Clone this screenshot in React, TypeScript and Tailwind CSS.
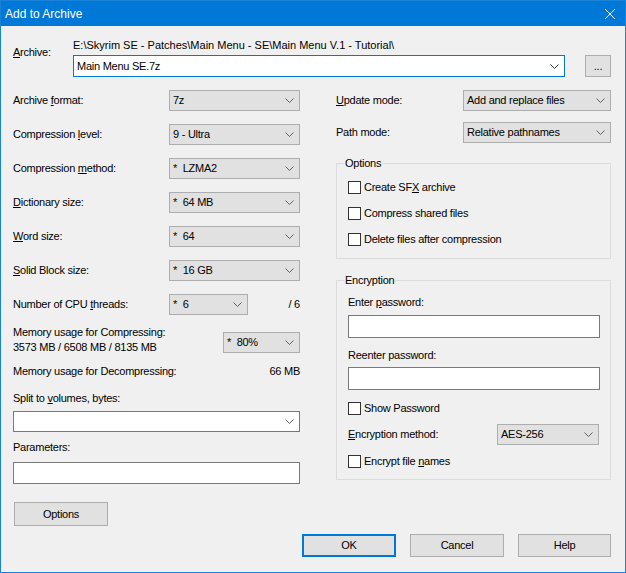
import type { ReactNode } from "react";
import { twMerge } from "tailwind-merge";

const archivePath = "E:\\Skyrim SE - Patches\\Main Menu - SE\\Main Menu V.1 - Tutorial\\";

const Chevron = ({ color = "#606060" }: { color?: string }) => (
  <svg width="9" height="5" viewBox="0 0 9 5" className="shrink-0">
    <polyline points="0.5,0.5 4.5,4.5 8.5,0.5" fill="none" stroke={color} strokeWidth="1" />
  </svg>
);

const Combo = ({ value, className }: { value?: ReactNode; className?: string }) => (
  <div
    className={twMerge(
      "flex h-[21px] items-center justify-between border border-[#adadad] bg-[#e1e1e1] pl-[3px] pr-[5px]",
      className
    )}
  >
    <span className="whitespace-pre">{value}</span>
    <Chevron />
  </div>
);

const Check = ({ children, className }: { children: ReactNode; className?: string }) => (
  <div className={twMerge("flex h-[16px] items-center pl-[11px]", className)}>
    <span className="h-[13px] w-[13px] border border-[#333333] bg-white" />
    <span className="ml-[3px]">{children}</span>
  </div>
);

const Group = ({ title, children, className }: { title: string; children: ReactNode; className?: string }) => (
  <div className={twMerge("flex flex-col border border-[#dcdcdc]", className)}>
    <span className="-mt-[8px] ml-[7px] self-start bg-[#f0f0f0] px-[1px] leading-[15px]">{title}</span>
    {children}
  </div>
);

const Button = ({ children, className }: { children: ReactNode; className?: string }) => (
  <div
    className={twMerge(
      "flex h-[24px] w-[94px] items-center justify-center border border-[#adadad] bg-[#e1e1e1]",
      className
    )}
  >
    {children}
  </div>
);

const Row = ({ label, value }: { label: ReactNode; value: string }) => (
  <div className="flex h-[21px] items-center justify-between">
    <span>{label}</span>
    <Combo value={value} className="w-[131px]" />
  </div>
);

const App = () => {
  return (
    <div className="flex h-[573px] w-[626px] flex-col border border-[#1883d7] bg-[#f0f0f0] font-['Liberation_Sans',Arial,sans-serif] text-[11px] tracking-[-0.25px] text-black">
      {/* title bar */}
      <div className="flex h-[25px] shrink-0 items-center justify-between bg-[#0078d7] pl-[4px] pr-[10px] text-[12px] tracking-normal text-white">
        <span>Add to Archive</span>
        <svg width="10" height="10" viewBox="0 0 10 10">
          <path d="M0 0 L10 10 M10 0 L0 10" stroke="white" strokeWidth="1" />
        </svg>
      </div>

      <div className="flex flex-col pl-[12px] pr-[14px] pt-[12px]">
        {/* archive */}
        <div className="flex">
          <div className="w-[60px] pt-[7px] leading-[15px]">
            <u>A</u>rchive:
          </div>
          <div className="flex flex-col">
            <div className="h-[15px] leading-[15px] tracking-normal">{archivePath}</div>
            <div className="mt-[2px] flex items-center">
              <div className="flex h-[22px] w-[492px] items-center justify-between border border-[#0078d7] bg-white pl-[3px] pr-[5px]">
                <span>Main Menu SE.7z</span>
                <Chevron color="#333333" />
              </div>
              <Button className="ml-[20px] h-[22px] w-[26px]">...</Button>
            </div>
          </div>
        </div>

        <div className="mt-[13px] flex">
          {/* left column */}
          <div className="flex w-[288px] flex-col">
            <div className="flex flex-col gap-[13px]">
              <Row label={<>Archive <u>f</u>ormat:</>} value="7z" />
              <Row label={<>Compression <u>l</u>evel:</>} value="9 - Ultra" />
              <Row label={<>Compression <u>m</u>ethod:</>} value="*  LZMA2" />
              <Row label={<><u>D</u>ictionary size:</>} value="*  64 MB" />
              <Row label={<><u>W</u>ord size:</>} value="*  64" />
              <Row label={<><u>S</u>olid Block size:</>} value="*  16 GB" />
              <div className="flex h-[21px] items-center">
                <span className="w-[156px]">
                  Number of CPU <u>t</u>hreads:
                </span>
                <Combo value="*  6" className="w-[79px]" />
                <span className="flex-1 text-right">/ 6</span>
              </div>
            </div>

            <div className="mt-[10px] flex items-start justify-between">
              <div className="leading-[15px]">
                Memory usage for Compressing:
                <br />
                3573 MB / 6508 MB / 8135 MB
              </div>
              <Combo value="*  80%" className="mt-[7px] w-[77px]" />
            </div>

            <div className="mt-[9px] flex justify-between leading-[15px]">
              <span>Memory usage for Decompressing:</span>
              <span>66 MB</span>
            </div>

            <div className="mt-[12px] leading-[15px]">
              Split to <u>v</u>olumes, bytes:
            </div>
            <Combo className="mt-[5px] border-[#7a7a7a] bg-white" />

            <div className="mt-[8px] leading-[15px]">Parameters:</div>
            <div className="mt-[7px] h-[22px] border border-[#7a7a7a] bg-white" />

            <Button className="ml-[1px] mt-[18px]">Options</Button>
          </div>

          {/* right column */}
          <div className="ml-[36px] flex w-[276px] flex-col">
            <div className="flex h-[21px] items-center justify-between">
              <span>
                <u>U</u>pdate mode:
              </span>
              <Combo value="Add and replace files" className="w-[148px]" />
            </div>
            <div className="mt-[11px] flex h-[21px] items-center justify-between">
              <span>Path mode:</span>
              <Combo value="Relative pathnames" className="w-[148px]" />
            </div>

            <Group title="Options" className="mt-[20px] h-[96px]">
              <Check className="mt-[8px]">
                Create SF<u>X</u> archive
              </Check>
              <Check className="mt-[10px]">Compress shared files</Check>
              <Check className="mt-[10px]">Delete files after compression</Check>
            </Group>

            <Group title="Encryption" className="mt-[21px] h-[200px]">
              <div className="mt-[7px] pl-[11px] leading-[15px]">
                Enter <u>p</u>assword:
              </div>
              <div className="ml-[11px] mt-[5px] h-[23px] w-[252px] border border-[#7a7a7a] bg-white" />
              <div className="mt-[10px] pl-[11px] leading-[15px]">Reenter password:</div>
              <div className="ml-[11px] mt-[4px] h-[23px] w-[252px] border border-[#7a7a7a] bg-white" />
              <Check className="mt-[10px]">Show Password</Check>
              <div className="mt-[8px] flex h-[21px] items-center pl-[11px] pr-[11px]">
                <span>
                  <u>E</u>ncryption method:
                </span>
                <Combo value="AES-256" className="ml-auto w-[102px]" />
              </div>
              <Check className="mt-[8px]">
                Encrypt file <u>n</u>ames
              </Check>
            </Group>
          </div>
        </div>

        <div className="mt-[8px] flex justify-end gap-[14px]">
          <Button className="h-[23px] border-2 border-[#0078d7]">OK</Button>
          <Button className="h-[23px]">Cancel</Button>
          <Button className="h-[23px] w-[93px]">Help</Button>
        </div>
      </div>
    </div>
  );
};

export default App;
